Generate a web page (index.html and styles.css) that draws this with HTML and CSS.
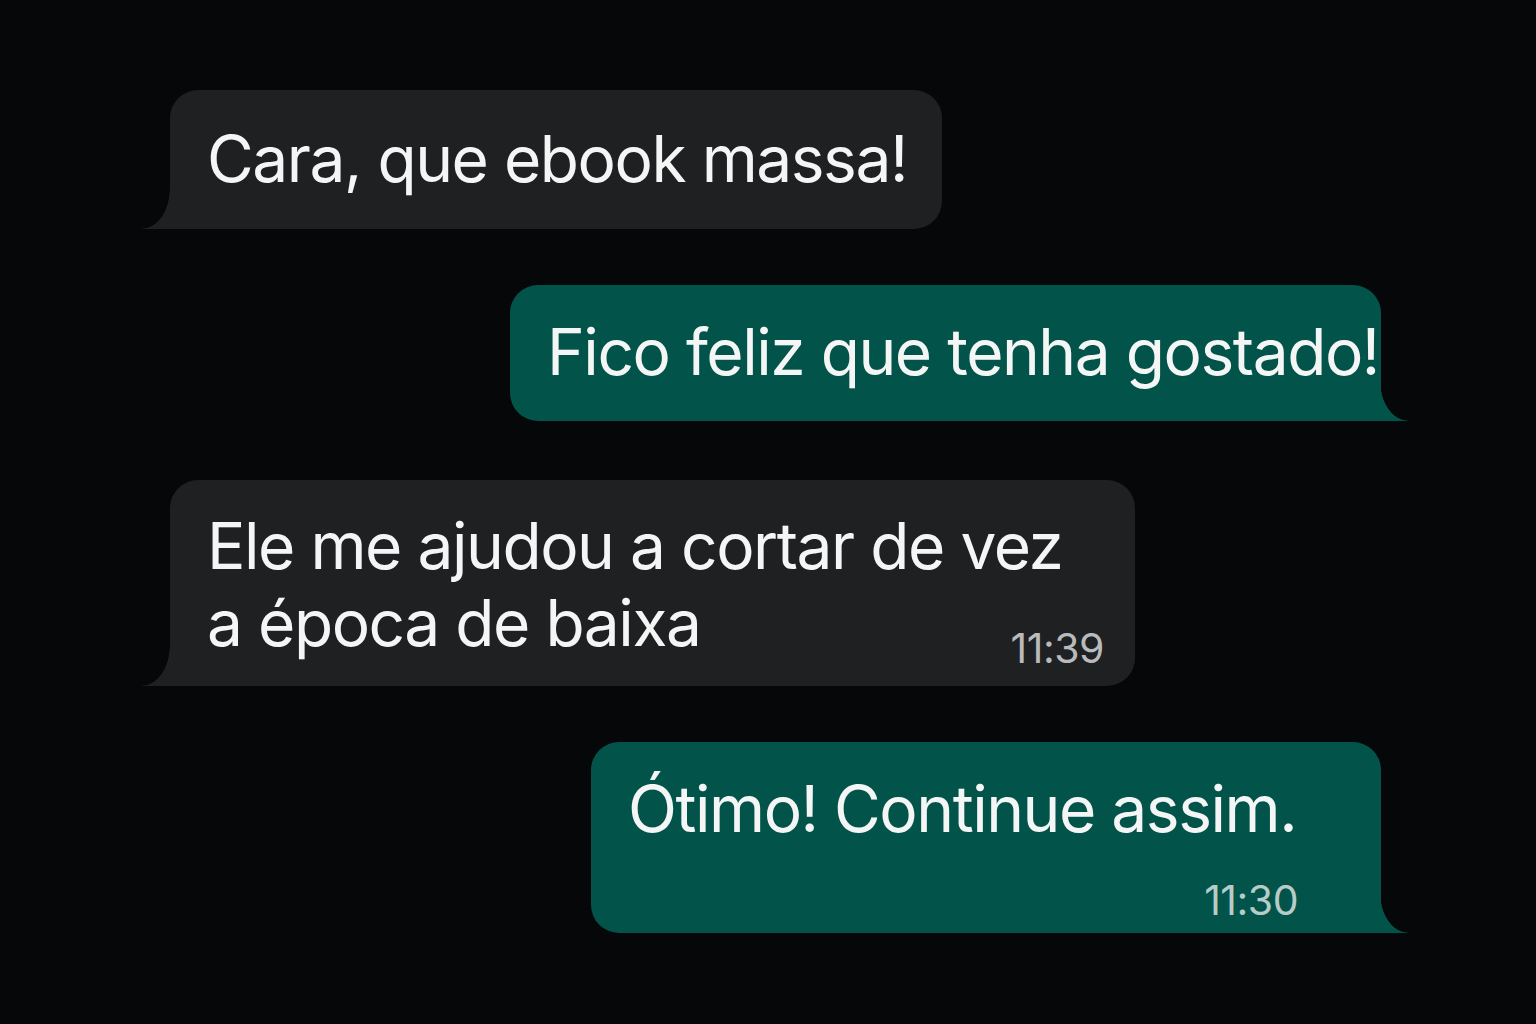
FILE: index.html
```html
<!DOCTYPE html>
<html lang="pt-BR">
<head>
    <meta charset="UTF-8">
    <meta name="viewport" content="width=device-width, initial-scale=1.0">
    <title>Conversa</title>
    <link rel="stylesheet" href="styles.css">
</head>
<body>
    <div class="chat">
        <div class="bubble in b1">
            <div class="text">Cara, que ebook massa!</div>
        </div>

        <div class="bubble out b2">
            <div class="text">Fico feliz que tenha gostado!</div>
        </div>

        <div class="bubble in b3">
            <div class="text">Ele me ajudou a cortar de vez<br>a época de baixa</div>
            <span class="time">11:39</span>
        </div>

        <div class="bubble out b4">
            <div class="text">Ótimo! Continue assim.</div>
            <div class="time-row"><span class="time">11:30</span></div>
        </div>
    </div>
</body>
</html>
```

FILE: styles.css
```css
body {
    margin: 0;
    background: #060708;
    font-family: Inter, 'Noto Sans', sans-serif;
    color: #f4f5f5;
}
.chat {
    display: flex;
    flex-direction: column;
    gap: 56px;
    padding: 90px 155px 0 170px;
}
.bubble {
    position: relative;
    box-sizing: border-box;
    border-radius: 28px;
}
.bubble.in {
    align-self: flex-start;
    background: #1f2022;
    border-bottom-left-radius: 0;
}
.bubble.out {
    align-self: flex-end;
    background: #02544a;
    border-bottom-right-radius: 0;
}
/* tails */
.bubble.in::before,
.bubble.out::before {
    content: "";
    position: absolute;
    bottom: 0;
    width: 28px;
    height: 40px;
}
.bubble.in::before {
    left: -28px;
    background: radial-gradient(ellipse 28px 40px at 0 0, transparent 98%, #1f2022 100%);
}
.bubble.out::before {
    right: -27px;
    background: radial-gradient(ellipse 28px 40px at 100% 0, transparent 98%, #02544a 100%);
}
.text {
    font-size: 64px;
    line-height: 77px;
    letter-spacing: -1.45px;
    white-space: nowrap;
}
.time {
    font-size: 41px;
    line-height: 40px;
    letter-spacing: -0.5px;
    color: #b9babc;
}
.out .time {
    color: #b7ccc8;
}
.b1 {
    width: 772px;
    padding: 30px 35px 32px 37px;
}
.b2 {
    width: 871px;
    padding: 28px 3px 31px 37px;
}
.b3 {
    width: 965px;
    padding: 27px 31px 25px 37px;
    margin-top: 3px;
}
.b3 .time {
    position: absolute;
    right: 31px;
    bottom: 18px;
}
.b4 {
    width: 790px;
    padding: 28px 83px 13px 37px;
}
.time-row {
    margin-top: 33px;
    text-align: right;
}
```
